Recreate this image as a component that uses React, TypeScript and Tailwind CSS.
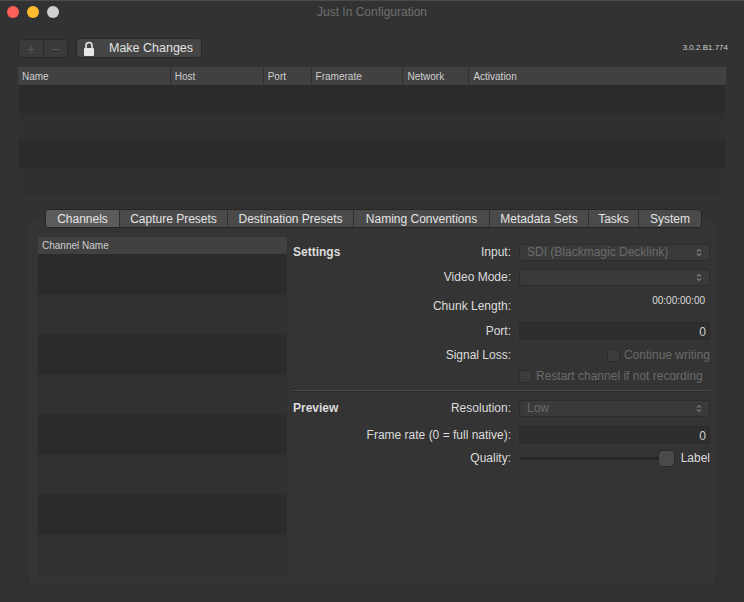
import React from "react";

const F = { fontFamily: '"Helvetica Neue", "Liberation Sans", Arial, sans-serif' };

function Lock() {
  return (
    <svg width="12" height="15" viewBox="0 0 12 15">
      <path d="M3 7V4.5a3 3 0 0 1 6 0V7" fill="none" stroke="#e8e8e8" strokeWidth="1.6" />
      <rect x="1" y="7" width="10" height="8" rx="1" fill="#e8e8e8" />
    </svg>
  );
}

function Stepper() {
  return (
    <svg width="6" height="9" viewBox="0 0 6 9" className="opacity-60">
      <path d="M1 3.5L3 1.5L5 3.5M1 5.5L3 7.5L5 5.5" fill="none" stroke="#aaa" strokeWidth="1.1" />
    </svg>
  );
}

function Label({ children }: { children: React.ReactNode }) {
  return <div className="w-[226px] text-right pr-[8px] text-[12px] text-[#dcdcdc] shrink-0 whitespace-nowrap">{children}</div>;
}

export default function App() {
  const tabs = ["Channels", "Capture Presets", "Destination Presets", "Naming Conventions", "Metadata Sets", "Tasks", "System"];
  const tabW = [74, 108, 126, 136, 99, 50, 62];
  return (
    <div style={F} className="w-[744px] h-[602px] bg-[#323232] flex flex-col overflow-hidden text-[#dcdcdc]">
      <div className="h-[22px] flex items-center relative border-t border-[#4a4a4a]">
        <div className="flex gap-[8px] pl-[7px]">
          <div className="w-[12px] h-[12px] rounded-full bg-[#fc5f57]" />
          <div className="w-[12px] h-[12px] rounded-full bg-[#fdbc2e]" />
          <div className="w-[12px] h-[12px] rounded-full bg-[#d0d0d0]" />
        </div>
        <div className="absolute inset-x-0 text-center text-[12px] text-[#6e6e6e]">Just In Configuration</div>
      </div>
      <div className="h-[45px] flex items-end pb-[9px] px-[18px] gap-[8px]">
        <div className="flex h-[19px] w-[50px] rounded-[4px] border border-[#2a2a2a] bg-[#3a3a3a] text-[#5a5a5a] text-[14px] leading-none">
          <div className="flex-1 flex items-center justify-center border-r border-[#2a2a2a]">+</div>
          <div className="flex-1 flex items-center justify-center">−</div>
        </div>
        <div className="h-[20px] w-[126px] rounded-[4px] border border-[#262626] bg-[#454545] flex items-center pl-[6px] gap-[14px] text-[12.5px] text-[#e2e2e2]">
          <Lock />
          <span>Make Changes</span>
        </div>
        <div className="flex-1" />
        <div className="text-[8px] text-[#cfcfcf] mr-[-2px] mb-[4px]">3.0.2.B1.774</div>
      </div>
      <div className="mx-[18px] h-[128px] flex flex-col bg-[#2b2b2b]">
        <div className="h-[19px] flex bg-[#414141] border-b border-[#2a2a2a] text-[10px] text-[#cfcfcf] items-center">
          {[["Name", 153], ["Host", 93], ["Port", 48], ["Framerate", 92], ["Network", 66], ["Activation", 257]].map(([n, w], i) => (
            <div key={i} style={{ width: w as number }} className={`h-full flex items-center pl-[4px] ${i < 5 ? "border-r border-[#2f2f2f]" : ""}`}>{n}</div>
          ))}
        </div>
        <div className="h-[27px] bg-[#2b2b2b]" />
        <div className="h-[28px] bg-[#303030]" />
        <div className="h-[27px] bg-[#2b2b2b]" />
        <div className="h-[27px] bg-[#303030]" />
      </div>
      <div className="relative mx-[27px] mt-[23px] mb-[17px] flex-1 border border-[#2e2e2e] rounded-[4px] bg-[#343434] flex pt-[18px] pl-[10px] pr-[18px] pb-[8px] gap-[6px]">
        <div className="absolute top-[-10px] left-[17px] flex h-[19px] rounded-[4px] border border-[#262626] bg-[#4a4a4a] text-[12px] text-[#e4e4e4] overflow-hidden">
          {tabs.map((t, i) => (
            <div key={t} style={{ width: tabW[i] }} className={`flex items-center justify-center ${i === 0 ? "bg-[#5c5c5c]" : ""} ${i < 6 ? "border-r border-[#2e2e2e]" : ""}`}>{t}</div>
          ))}
        </div>
        <div className="w-[249px] flex flex-col bg-[#2d2d2d]">
          <div className="h-[18px] bg-[#414141] border-b border-[#2a2a2a] text-[10px] text-[#cfcfcf] flex items-center pl-[4px]">Channel Name</div>
          {[0, 1, 2, 3, 4, 5, 6, 7].map((i) => (
            <div key={i} className={`h-[40px] ${i % 2 ? "bg-[#313131]" : "bg-[#2b2b2b]"}`} />
          ))}
        </div>
        <div className="flex-1 flex flex-col text-[12px] mt-[4px] mr-[-12px]">
          <div className="flex items-center h-[22px]">
            <div className="w-[0] whitespace-nowrap font-bold">Settings</div>
            <Label>Input:</Label>
            <div className="flex-1 h-[17px] rounded-[3px] border border-[#2c2c2c] bg-[#3a3a3a] flex items-center justify-between px-[7px] text-[#6b6b6b]">
              <span>SDI (Blackmagic Decklink)</span><Stepper />
            </div>
          </div>
          <div className="flex items-center h-[22px] mt-[3px]">
            <Label>Video Mode:</Label>
            <div className="flex-1 h-[17px] rounded-[3px] border border-[#2c2c2c] bg-[#3a3a3a] flex items-center justify-end px-[7px]"><Stepper /></div>
          </div>
          <div className="flex items-start h-[26px] mt-[3px] pt-[6px]">
            <Label>Chunk Length:</Label>
            <div className="flex-1 text-right text-[10px] mt-[-4px] pr-[5px]">00:00:00:00</div>
          </div>
          <div className="flex items-center h-[22px] mt-[3px]">
            <Label>Port:</Label>
            <div className="flex-1 h-[18px] bg-[#2e2e2e] border border-[#2a2a2a] rounded-[2px] text-right pr-[3px] text-[#cfcfcf]">0</div>
          </div>
          <div className="flex items-center h-[26px]">
            <Label>Signal Loss:</Label>
            <div className="flex-1 flex items-center justify-end gap-[4px] text-[#6b6b6b] whitespace-nowrap">
              <div className="w-[13px] h-[13px] rounded-[3px] bg-[#3c3c3c] border border-[#2c2c2c]" />
              <span>Continue writing</span>
            </div>
          </div>
          <div className="flex items-center h-[16px]">
            <div className="w-[226px] shrink-0" />
            <div className="flex-1 flex items-center gap-[4px] text-[#6b6b6b] whitespace-nowrap">
              <div className="w-[13px] h-[13px] rounded-[3px] bg-[#3c3c3c] border border-[#2c2c2c] shrink-0" />
              <span>Restart channel if not recording</span>
            </div>
          </div>
          <div className="h-[2px] bg-[#484848] mt-[6px] mb-[5px] border-b border-[#2a2a2a]" />
          <div className="flex items-center h-[22px]">
            <div className="w-[0] whitespace-nowrap font-bold">Preview</div>
            <Label>Resolution:</Label>
            <div className="flex-1 h-[17px] rounded-[3px] border border-[#2c2c2c] bg-[#3a3a3a] flex items-center justify-between px-[7px] text-[#6b6b6b]">
              <span>Low</span><Stepper />
            </div>
          </div>
          <div className="flex items-center h-[22px] mt-[5px]">
            <Label>Frame rate (0 = full native):</Label>
            <div className="flex-1 h-[18px] bg-[#2e2e2e] border border-[#2a2a2a] rounded-[2px] text-right pr-[3px] text-[#cfcfcf]">0</div>
          </div>
          <div className="flex items-center h-[22px] mt-[1px]">
            <Label>Quality:</Label>
            <div className="flex-1 flex items-center gap-[6px]">
              <div className="flex-1 relative h-[16px] flex items-center">
                <div className="w-full h-[3px] rounded bg-[#262626]" />
                <div className="absolute right-0 w-[17px] h-[17px] rounded-[4px] bg-[#4a4a4a] border border-[#2a2a2a]" />
              </div>
              <span>Label</span>
            </div>
          </div>
        </div>
      </div>
    </div>
  );
}
